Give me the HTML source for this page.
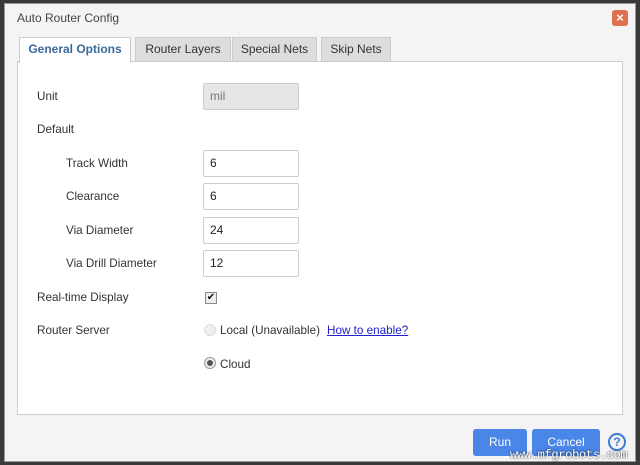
<!DOCTYPE html>
<html><head><style>
*{box-sizing:border-box;margin:0;padding:0}
body{width:640px;height:465px;background:#3a3a3a;font-family:"Liberation Sans",sans-serif;font-size:12px;color:#333;position:relative;overflow:hidden}
.dlg{position:absolute;left:4px;top:3px;width:632px;height:459px;background:#f4f4f4;border:1px solid #999}
.abs{position:absolute}
.title{left:12px;top:7px;font-size:12px;color:#444}
.close{left:607px;top:6px;width:16px;height:16px;background:#e07050;border-radius:3px;color:#fff;font-size:13px;line-height:15px;text-align:center;font-weight:bold}
.tab{top:33px;height:25px;background:#ddd;border:1px solid #ccc;border-bottom:none;font-size:12px;line-height:23px;text-align:center;color:#333}
.tab.on{background:#fff;color:#3a6a9a;font-weight:bold;height:26px;z-index:2}
.panel{left:12px;top:57px;width:606px;height:354px;background:#fff;border:1px solid #ccc}
.lbl{font-size:11.7px;color:#333}
.inp{width:96px;height:27px;border:1px solid #ccc;background:#fff;padding-left:6px;line-height:25px;font-size:12px;color:#222;border-radius:2px}
.btn{top:425px;height:27px;background:#4a86e8;color:#fff;border-radius:3px;text-align:center;line-height:27px;font-size:12px}
</style></head><body>
<div class="dlg">
<div class="abs title">Auto Router Config</div>
<div class="abs close">×</div>
<div class="abs tab on" style="left:14px;width:112px">General Options</div>
<div class="abs tab" style="left:130px;width:96px">Router Layers</div>
<div class="abs tab" style="left:227px;width:85px">Special Nets</div>
<div class="abs tab" style="left:316px;width:70px">Skip Nets</div>
<div class="abs panel"></div>
<div class="abs lbl" style="left:32px;top:86px">Unit</div>
<div class="abs inp" style="left:198px;top:79px;background:#e6e6e6;color:#777">mil</div>
<div class="abs lbl" style="left:32px;top:119px">Default</div>
<div class="abs lbl" style="left:61px;top:153px">Track Width</div>
<div class="abs inp" style="left:198px;top:146px">6</div>
<div class="abs lbl" style="left:61px;top:186px">Clearance</div>
<div class="abs inp" style="left:198px;top:179px">6</div>
<div class="abs lbl" style="left:61px;top:220px">Via Diameter</div>
<div class="abs inp" style="left:198px;top:213px">24</div>
<div class="abs lbl" style="left:61px;top:253px">Via Drill Diameter</div>
<div class="abs inp" style="left:198px;top:246px">12</div>
<div class="abs lbl" style="left:32px;top:287px">Real-time Display</div>
<div class="abs" style="left:200px;top:288px;width:12px;height:12px;border:1px solid #888;background:#eee;font-size:10px;line-height:10px;text-align:center;color:#111">✔</div>
<div class="abs lbl" style="left:32px;top:320px">Router Server</div>
<div class="abs" style="left:199px;top:320px;width:12px;height:12px;border-radius:50%;background:#eee;border:1px solid #ddd"></div>
<div class="abs lbl" style="left:215px;top:320px">Local (Unavailable)</div>
<div class="abs lbl" style="left:322px;top:320px;color:#22c;text-decoration:underline">How to enable?</div>
<div class="abs" style="left:199px;top:353px;width:12px;height:12px;border-radius:50%;background:#eee;border:1px solid #999"><div style="margin:2px;width:6px;height:6px;border-radius:50%;background:#555"></div></div>
<div class="abs lbl" style="left:215px;top:354px">Cloud</div>
<div class="abs btn" style="left:468px;width:54px">Run</div>
<div class="abs btn" style="left:527px;width:68px">Cancel</div>
<div class="abs" style="left:603px;top:429px;width:18px;height:18px;border:2px solid #3a7ad8;border-radius:50%;color:#3a7ad8;font-weight:bold;font-size:12px;line-height:14px;text-align:center">?</div>
</div>
<div class="abs" style="left:510px;top:448px;font-family:'Liberation Mono',monospace;font-size:12px;letter-spacing:-0.3px;color:#fff;text-shadow:0 0 2px #000">www.mfgrobots.com</div>
</body></html>
